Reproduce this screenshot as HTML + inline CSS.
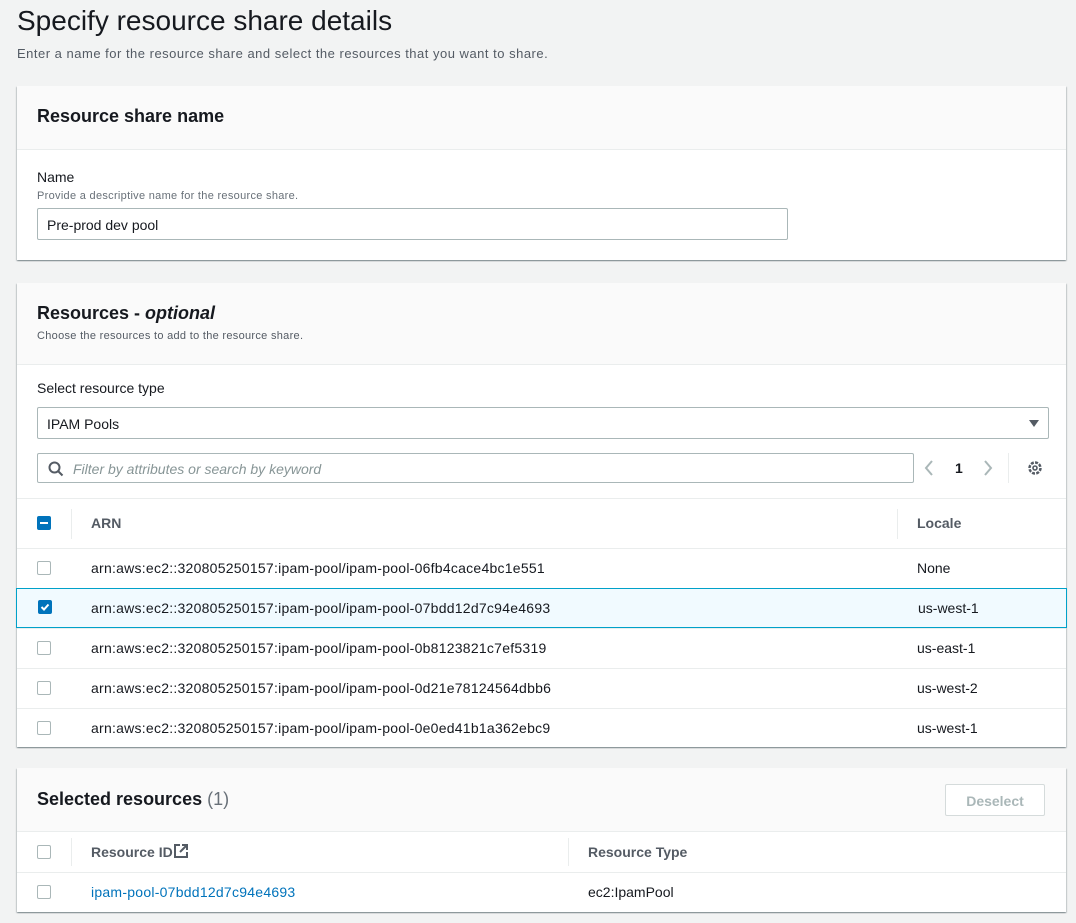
<!DOCTYPE html>
<html><head><style>
*{box-sizing:border-box;margin:0;padding:0}
body{width:1076px;height:923px;background:#f2f3f3;font-family:"Liberation Sans",sans-serif;font-size:14px;color:#16191f;position:relative;overflow:hidden}
.abs{position:absolute}
.panel{position:absolute;left:17px;width:1049px;background:#fff;box-shadow:0 1px 1px 0 rgba(0,28,36,.3),1px 1px 1px 0 rgba(0,28,36,.15),-1px 1px 1px 0 rgba(0,28,36,.15)}
.ph{position:absolute;left:0;top:0;right:0;background:#fafafa;border-bottom:1px solid #eaeded}
h2{font-size:18px;font-weight:bold;position:absolute;left:20px}
.cb{position:absolute;width:14px;height:14px;border:1px solid #aab7b8;border-radius:2px;background:#fff}
.cbon{background:#0073bb;border-color:#0073bb}
.row{position:absolute;left:0;right:0;height:40px;border-top:1px solid #eaeded}
.row .t{position:absolute;left:74px;top:12px;letter-spacing:0.25px}
.row .l{position:absolute;left:900px;top:12px}
.th{font-weight:bold;color:#545b64}
</style></head><body>
<div class="abs" style="left:17px;top:5px;font-size:28px;color:#16191f">Specify resource share details</div>
<div class="abs" style="left:17px;top:46px;font-size:13px;color:#545b64;letter-spacing:0.5px">Enter a name for the resource share and select the resources that you want to share.</div>

<div class="panel" style="top:86px;height:174px">
 <div class="ph" style="height:64px"><h2 style="top:20px">Resource share name</h2></div>
 <div class="abs" style="left:20px;top:83px">Name</div>
 <div class="abs" style="left:20px;top:104px;font-size:11px;color:#687078;letter-spacing:0.3px">Provide a descriptive name for the resource share.</div>
 <div class="abs" style="left:20px;top:122px;width:751px;height:32px;border:1px solid #aab7b8;border-radius:2px;padding:8px 9px">Pre-prod dev pool</div>
</div>

<div class="panel" style="top:283px;height:464px">
 <div class="ph" style="height:82px"><h2 style="top:20px">Resources - <i>optional</i></h2>
  <div class="abs" style="left:20px;top:47px;font-size:11px;color:#545b64;letter-spacing:0.3px">Choose the resources to add to the resource share.</div></div>
 <div class="abs" style="left:20px;top:97px">Select resource type</div>
 <div class="abs" style="left:20px;top:124px;width:1012px;height:32px;border:1px solid #aab7b8;border-radius:2px;padding:8px 9px">IPAM Pools
  <svg class="abs" style="right:8px;top:11px" width="12" height="9"><path d="M1 1h10L6 8z" fill="#545b64"/></svg></div>
 <div class="abs" style="left:20px;top:170px;width:877px;height:30px;border:1px solid #aab7b8;border-radius:2px">
  <svg class="abs" style="left:10px;top:7px" width="16" height="16"><circle cx="6.5" cy="6.5" r="5" fill="none" stroke="#545b64" stroke-width="2"/><path d="M10 10l4.5 4.5" stroke="#545b64" stroke-width="2"/></svg>
  <div class="abs" style="left:35px;top:7px;color:#879596;font-style:italic">Filter by attributes or search by keyword</div></div>
 <svg class="abs" style="left:907px;top:177px" width="10" height="16"><path d="M8 1L2 8l6 7" fill="none" stroke="#aab7b8" stroke-width="2"/></svg>
 <div class="abs" style="left:938px;top:177px;font-weight:bold">1</div>
 <svg class="abs" style="left:966px;top:177px" width="10" height="16"><path d="M2 1l6 7-6 7" fill="none" stroke="#aab7b8" stroke-width="2"/></svg>
 <div class="abs" style="left:991px;top:170px;width:1px;height:30px;background:#eaeded"></div>
 <svg class="abs" style="left:1009px;top:176px" width="18" height="18"><circle cx="9" cy="9" r="5.5" fill="none" stroke="#545b64" stroke-width="2.5" stroke-dasharray="3 1.3"/><circle cx="9" cy="9" r="2" fill="none" stroke="#545b64" stroke-width="1.6"/></svg>
 <div class="row" style="top:215px;height:50px">
  <div class="cb cbon" style="left:20px;top:17px"><div style="position:absolute;left:2px;top:5px;width:8px;height:2px;background:#fff"></div></div>
  <div class="abs" style="left:54px;top:10px;width:1px;height:30px;background:#eaeded"></div>
  <div class="abs th" style="left:74px;top:16px">ARN</div>
  <div class="abs" style="left:880px;top:10px;width:1px;height:30px;background:#eaeded"></div>
  <div class="abs th" style="left:900px;top:16px">Locale</div>
 </div>
 <div class="row" style="top:265px"><div class="cb" style="left:20px;top:12px"></div><span class="t" style="top:11px">arn:aws:ec2::320805250157:ipam-pool/ipam-pool-06fb4cace4bc1e551</span><span class="l" style="top:11px">None</span></div>
 <div class="row" style="top:305px;background:#f1faff;border:1px solid #00a1c9;left:-1px;right:-1px"><div class="cb cbon" style="left:21px;top:11px"><svg style="position:absolute;left:1px;top:1px" width="10" height="10"><path d="M1.5 5l2.5 2.5 4.5-5" fill="none" stroke="#fff" stroke-width="2"/></svg></div><span class="t" style="left:74px;top:11px">arn:aws:ec2::320805250157:ipam-pool/ipam-pool-07bdd12d7c94e4693</span><span class="l" style="left:901px;top:11px">us-west-1</span></div>
 <div class="row" style="top:345px"><div class="cb" style="left:20px;top:12px"></div><span class="t" style="top:11px">arn:aws:ec2::320805250157:ipam-pool/ipam-pool-0b8123821c7ef5319</span><span class="l" style="top:11px">us-east-1</span></div>
 <div class="row" style="top:385px"><div class="cb" style="left:20px;top:12px"></div><span class="t" style="top:11px">arn:aws:ec2::320805250157:ipam-pool/ipam-pool-0d21e78124564dbb6</span><span class="l" style="top:11px">us-west-2</span></div>
 <div class="row" style="top:425px"><div class="cb" style="left:20px;top:12px"></div><span class="t" style="top:11px">arn:aws:ec2::320805250157:ipam-pool/ipam-pool-0e0ed41b1a362ebc9</span><span class="l" style="top:11px">us-west-1</span></div>
</div>

<div class="panel" style="top:768px;height:144px">
 <div class="ph" style="height:64px"><h2 style="top:21px">Selected resources <span style="font-weight:normal;color:#687078">(1)</span></h2>
  <div class="abs" style="left:928px;top:16px;width:100px;height:32px;border:1px solid #d5dbdb;border-radius:2px;background:#fff;color:#aab7b8;font-weight:bold;text-align:center;padding-top:8px">Deselect</div></div>
 <div class="row" style="top:64px;height:40px;border-top:none">
  <div class="cb" style="left:20px;top:13px"></div>
  <div class="abs" style="left:54px;top:6px;width:1px;height:28px;background:#eaeded"></div>
  <div class="abs th" style="left:74px;top:12px">Resource ID</div>
  <svg class="abs" style="left:157px;top:12px" width="14" height="14"><path d="M6 1H1v12h12V8" fill="none" stroke="#545b64" stroke-width="2"/><path d="M8 1h5v5M13 1L6 8" fill="none" stroke="#545b64" stroke-width="2"/></svg>
  <div class="abs" style="left:551px;top:6px;width:1px;height:28px;background:#eaeded"></div>
  <div class="abs th" style="left:571px;top:12px">Resource Type</div>
 </div>
 <div class="row" style="top:104px"><div class="cb" style="left:20px;top:12px"></div><span class="t" style="color:#0073bb;top:11px">ipam-pool-07bdd12d7c94e4693</span><span class="l" style="left:571px;top:11px">ec2:IpamPool</span></div>
</div>
</body></html>
